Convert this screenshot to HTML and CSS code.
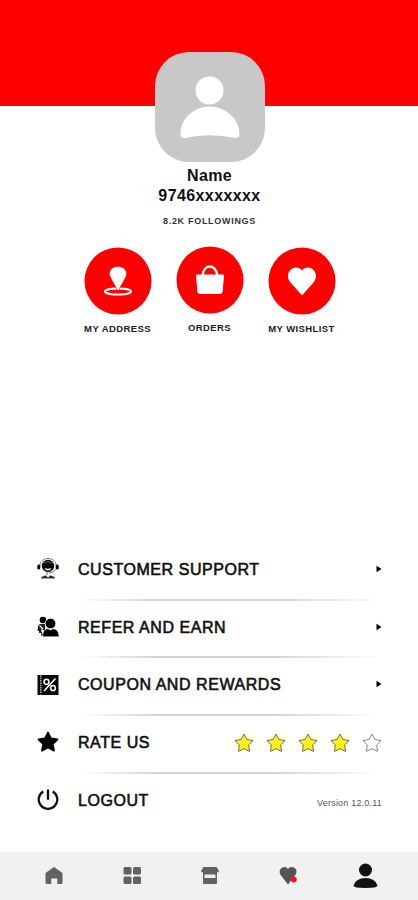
FILE: index.html
```html
<!DOCTYPE html>
<html lang="en">
<head>
<meta charset="utf-8">
<title>Profile</title>
<link rel="stylesheet" href="styles.css">
</head>
<body>
<div class="screen">
  <header class="banner"></header>
  <main class="profile">
    <svg class="avatar" viewBox="0 0 110 110"><rect width="110" height="110" rx="34" fill="#c8c8c8"/><circle cx="54.500" cy="38.500" r="14" fill="#fff"/><path d="M25.500 82C25 67 39 54.500 54.500 54.500S85 67 84.500 82Q84.500 86.500 80 86Q54.500 80.500 30 86Q25.500 86.500 25.500 82Z" fill="#fff"/></svg>
    <h1 class="name">Name</h1>
    <p class="phone">9746xxxxxxx</p>
    <p class="followings">8.2K FOLLOWINGS</p>
    <div class="actions">
      <a class="action">
        <svg class="disc" viewBox="0 0 68 68"><circle cx="34" cy="34" r="33.500" fill="#fe0000"/><ellipse cx="34" cy="44.500" rx="13" ry="3" fill="none" stroke="#fff" stroke-width="2"/><path d="M34 44L27 31.500C22.500 24 28.500 19.500 34 19.500S45.500 24 41 31.500Z" fill="#fff" stroke="#fe0000" stroke-width=".5"/></svg>
        <span class="label">MY ADDRESS</span>
      </a>
      <a class="action raised">
        <svg class="disc" viewBox="0 0 68 68"><circle cx="34" cy="34" r="33.500" fill="#fe0000"/><path d="M20.500 29H47.500L46.200 45.500Q46 47.500 44 47.500H24Q22 47.500 21.800 45.500Z" fill="#fff" stroke="#fff" stroke-linejoin="round"/><path d="M26.500 29.500C28 17.500 39 17.500 41.500 29.500" fill="none" stroke="#fff" stroke-width="2.300"/></svg>
        <span class="label">ORDERS</span>
      </a>
      <a class="action">
        <svg class="disc" viewBox="0 0 68 68"><circle cx="34" cy="34" r="33.500" fill="#fe0000"/><path d="M34 48.500L22.500 35.500C17 29 21.500 20.500 28 20.500Q32 20.500 34 23.500Q36 20.500 40 20.500C46.500 20.500 51 29 45.500 35.500Z" fill="#fff"/></svg>
        <span class="label">MY WISHLIST</span>
      </a>
    </div>
  </main>
  <nav class="menu">
    <a class="row">
      <svg class="icon" viewBox="0 0 22 22"><circle cx="11" cy="8" r="6.200" fill="#080808"/><path d="M2.800 8C3 -2 19 -2 19.200 8" fill="none" stroke="#777" stroke-width="1"/><path d="M6 5Q11 2 16 5M7 12Q11 14.500 15 12" fill="none" stroke="#777" stroke-width=".8"/><path d="M7.500 10Q11 11.500 14.500 10Q13.500 12.300 11 12.300T7.500 10Z" fill="#fff"/><rect x=".3" y="6.500" width="3" height="5" rx="1.500"/><rect x="18.700" y="6.500" width="3" height="5" rx="1.500"/><path d="M18.800 11Q17 15 12 15M10 14V17" fill="none" stroke="#777"/><path d="M4 20.500Q4.500 17.800 9 17.500L11 18.500L13 17.500Q17.500 17.800 18 20.500Z" fill="#333"/><path d="M9 17.500L11 19.800L13 17.500Z" fill="#ddd"/></svg>
      <span class="title">CUSTOMER SUPPORT</span><svg class="arrow" viewBox="0 0 6 8"><path d="M.5 .8L5.500 4L.5 7.200Z"/></svg>
    </a>
    <a class="row">
      <svg class="icon" viewBox="0 0 22 22"><circle cx="6" cy="4" r="3.300"/><path d="M1 11Q1 8 4 8H8V14H5V17H2L2 15H.5Z" fill="#222"/><path d="M5 17V20" stroke="#222" stroke-width="1.500"/><path d="M2.500 9.500L6 13M5 12V16" stroke="#fff" stroke-width="1.100"/><circle cx="13.500" cy="7.500" r="5.300" stroke="#fff" stroke-width=".8"/><path d="M5.800 20.800C5.500 15 8 12.800 11 12.800L13.500 14L16 12.800C19.500 12.800 22 15.500 22 20.800Z" stroke="#fff" stroke-width=".6"/></svg>
      <span class="title">REFER AND EARN</span><svg class="arrow" viewBox="0 0 6 8"><path d="M.5 .8L5.500 4L.5 7.200Z"/></svg>
    </a>
    <a class="row">
      <svg class="icon" viewBox="0 0 22 22"><path d="M.5 1H21.500V21H.5Z" fill="#080808"/><path d="M3.800 1.500V20.500" stroke="#bbb" stroke-width="1.400" stroke-dasharray="1.500 .8"/><g fill="none" stroke="#fff" stroke-width="1.500"><ellipse cx="9.500" cy="7.800" rx="2.400" ry="2.600"/><ellipse cx="16" cy="14" rx="2.400" ry="2.600"/><path d="M18.500 4.500L7 17"/></g></svg>
      <span class="title">COUPON AND REWARDS</span><svg class="arrow" viewBox="0 0 6 8"><path d="M.5 .8L5.500 4L.5 7.200Z"/></svg>
    </a>
    <div class="row">
      <svg class="icon" viewBox="0 0 22 22"><path d="M11 1.500L13.900 7.400L20.500 8.300L15.700 13L17 19.700L11 16.500L5 19.700L6.300 13L1.500 8.300L8.100 7.400Z" stroke="#000" stroke-width="1.800" stroke-linejoin="round"/></svg>
      <span class="title">RATE US</span>
      <span class="stars">
        <svg class="star" viewBox="0 0 22 22"><path d="M11 2L13.900 7.500L20.100 8.600L15.600 13L16.600 19.400L11 16.700L5.400 19.400L6.400 13L1.900 8.600L8.100 7.500Z"/></svg>
        <svg class="star" viewBox="0 0 22 22"><path d="M11 2L13.900 7.500L20.100 8.600L15.600 13L16.600 19.400L11 16.700L5.400 19.400L6.400 13L1.900 8.600L8.100 7.500Z"/></svg>
        <svg class="star" viewBox="0 0 22 22"><path d="M11 2L13.900 7.500L20.100 8.600L15.600 13L16.600 19.400L11 16.700L5.400 19.400L6.400 13L1.900 8.600L8.100 7.500Z"/></svg>
        <svg class="star" viewBox="0 0 22 22"><path d="M11 2L13.900 7.500L20.100 8.600L15.600 13L16.600 19.400L11 16.700L5.400 19.400L6.400 13L1.900 8.600L8.100 7.500Z"/></svg>
        <svg class="star empty" viewBox="0 0 22 22"><path d="M11 2L13.900 7.500L20.100 8.600L15.600 13L16.600 19.400L11 16.700L5.400 19.400L6.400 13L1.900 8.600L8.100 7.500Z"/></svg>
      </span>
    </div>
    <div class="row">
      <svg class="icon" viewBox="0 0 22 22"><path d="M6.300 2.500A9.300 9.300 0 1 0 15.700 2.500M11 .5V10.800" fill="none" stroke="#111" stroke-width="2.300"/></svg>
      <span class="title">LOGOUT</span><span class="version">Version 12.0.11</span>
    </div>
  </nav>
  <footer class="tabs">
    <svg class="tab" viewBox="0 0 26 26"><path d="M4.500 10L13 4L21.500 10V19.500Q21.500 21 20 21H16.300V15.500H10.300V21H6Q4.500 21 4.500 19.500Z" fill="#626262"/></svg>
    <svg class="tab" viewBox="0 0 26 26" fill="#626262"><rect x="4.500" y="4" width="8" height="7.500" rx="1.500"/><rect x="14" y="4" width="8" height="7.500" rx="1.500"/><rect x="4.500" y="13.500" width="8" height="7.500" rx="1.500"/><rect x="14" y="13.500" width="8" height="7.500" rx="1.500"/></svg>
    <svg class="tab" viewBox="0 0 26 26" fill="#626262"><path d="M6.500 4H19.500L21.700 7.500V9.300H4.300V7.500Z"/><path d="M6 9H20V20Q20 21 19 21H7Q6 21 6 20Z"/><path d="M7.500 11.500H18.500V15H7.500Z" fill="#f1f1f1"/></svg>
    <svg class="tab" viewBox="0 0 26 26"><path d="M13 21.500L6 12.500C2.500 7.500 6.500 4 9.500 4Q12 4 13 6Q14 4 16.500 4C20.500 4 23.500 8 20 12.500Z" fill="#555"/><circle cx="18.800" cy="16.500" r="2.900" fill="#fe1020"/></svg>
    <svg class="tab" viewBox="0 0 26 26"><circle cx="12.500" cy="7" r="6.500" fill="#111"/><path d="M.5 22.500Q3 15 12.500 15T24.500 22.500Q24.500 25 12.500 25T.5 22.500Z" fill="#111"/></svg>
  </footer>
</div>
</body>
</html>
```

FILE: styles.css
```css
* { box-sizing: border-box; }
body { margin: 0; background: #fff; color: #111; font-family: "Liberation Sans", Arial, sans-serif; }
h1, p { margin: 0; }
svg { display: block; flex: none; }
.screen { width: 418px; height: 900px; display: flex; flex-direction: column; overflow: hidden; }
.banner { height: 106px; flex: none; background: #fe0000; }

.profile { display: flex; flex-direction: column; align-items: center; margin-top: -54px; height: 489px; flex: none; padding-left: 1px; }
.avatar { width: 110px; height: 110px; }
.name { font-size: 16px; line-height: 20px; letter-spacing: .3px; margin-top: 4px; }
.phone { font-size: 16px; font-weight: 700; line-height: 19px; letter-spacing: .4px; }
.followings { font-size: 9px; font-weight: 700; line-height: 12px; letter-spacing: .7px; margin-top: 10px; color: #333; }
.actions { display: flex; gap: 24px; margin-top: 20px; }
.action { width: 68px; display: flex; flex-direction: column; align-items: center; }
.raised { margin-top: -1px; }
.disc { width: 68px; height: 68px; }
.label { font-size: 9.500px; font-weight: 700; line-height: 12px; margin-top: 8px; white-space: nowrap; color: #222; letter-spacing: .4px; }

.menu { padding: 0 36px 0 37px; flex: none; }
.row { height: 57.700px; display: flex; align-items: center; position: relative; }
.row:not(:last-child)::after { content: ""; position: absolute; right: 0; bottom: -2px; width: 302px; height: 2px; background: linear-gradient(90deg, transparent, #d4d4d4 25%, #d4d4d4 65%, transparent); }
.icon { width: 22px; height: 22px; margin-top: -1px; }
.title { margin-left: 19px; font-size: 16px; line-height: 20px; letter-spacing: .55px; color: #111; -webkit-text-stroke: .6px #111; }
.arrow { width: 6px; height: 8px; margin-left: auto; margin-top: -2px; }
.stars { display: flex; gap: 10px; margin-left: auto; margin-right: -1px; }
.star { width: 22px; height: 22px; fill: #fff01a; stroke: #77733a; stroke-width: 1; stroke-linejoin: round; }
.empty { fill: #fff; stroke: #888; }
.version { font-size: 9px; margin-left: auto; color: #555; letter-spacing: .2px; padding-top: 5px; }

.tabs { margin-top: auto; height: 48px; flex: none; background: #f1f1f1; display: flex; justify-content: space-between; align-items: center; padding: 0 39px 0 41px; }
.tab { width: 26px; height: 26px; }
```
